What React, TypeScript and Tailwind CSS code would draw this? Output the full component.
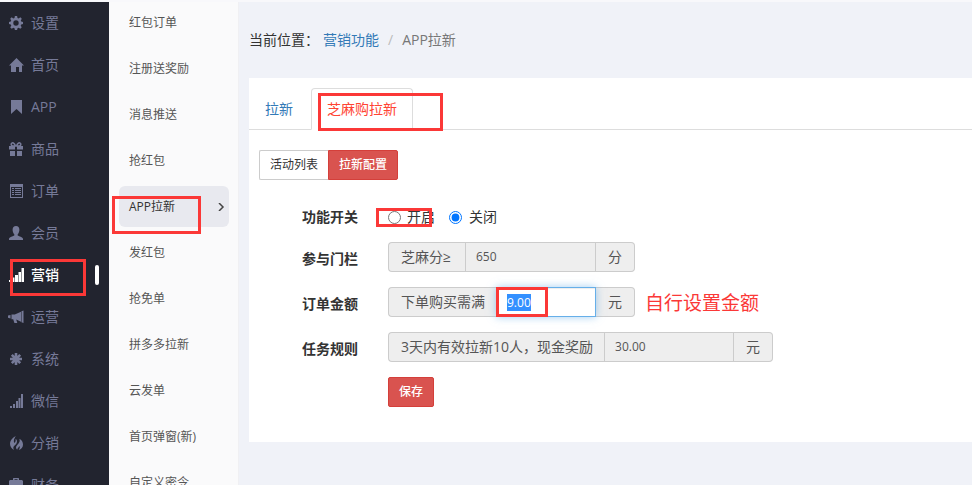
import { useEffect, useRef, useState } from 'react';
import type { ReactNode } from 'react';

interface NavItem {
  label: string;
  icon: ReactNode;
}

const navItems: NavItem[] = [
  {
    label: '设置',
    icon: (
      <path
        fillRule="evenodd"
        d="M5.900 0h2.200l.4 1.900 1.200.5 1.600-1.100 1.500 1.500-1 1.700.4 1.100 1.800.4v2.100l-1.800.4-.5 1.200 1.100 1.600-1.500 1.500-1.700-1.100-1.100.5L8.100 14H5.900l-.4-1.800-1.100-.5-1.700 1.100-1.500-1.500 1.100-1.600-.5-1.200L0 8.100V6l1.800-.4.4-1.100-1-1.700 1.500-1.500 1.600 1.100 1.200-.5zM7 4.300a2.700 2.700 0 1 0 0 5.400 2.700 2.700 0 0 0 0-5.400z"
      />
    ),
  },
  { label: '首页', icon: <path d="M7.500 0L15 7.500h-2V14h-3V9H7v5H2V7.500H0z" /> },
  { label: 'APP', icon: <path d="M2 0h11v14L7.500 9 2 14z" /> },
  {
    label: '商品',
    icon: (
      <>
        <path d="M0 4h6v3.500H0zM8 4h6v3.500H8zM1 9h5v5H1zM8 9h5v5H8z" />
        <path
          d="M6.500 4C5.500 1.500 4.300.7 3.200.9 1.800 1.200 1.700 3.500 3.500 4zM7.500 4C8.500 1.500 9.700.7 10.800.9c1.400.3 1.500 2.600-.3 3.100z"
          fill="none"
          stroke="currentColor"
          strokeWidth="1.500"
        />
      </>
    ),
  },
  {
    label: '订单',
    icon: (
      <path
        fillRule="evenodd"
        d="M1 0h13v14H1zM2 3v10h11V3zM3 4h2v1H3zM6 4h6v1H6zM3 6h2v1H3zM6 6h6v1H6zM3 8h2v1H3zM6 8h6v1H6zM3 10h2v1H3zM6 10h6v1H6z"
      />
    ),
  },
  {
    label: '会员',
    icon: (
      <path d="M7 0c2.200 0 3.400 1.500 3.400 3.800 0 1.800-.7 3.500-1.700 4.500v1.300c1 .8 5.300 1.500 5.300 3.400v1H0v-1c0-1.900 4.300-2.600 5.300-3.400V8.300c-1-1-1.700-2.700-1.700-4.500C3.600 1.500 4.800 0 7 0z" />
    ),
  },
  {
    label: '营销',
    icon: <path d="M0 12h2v2H0zM3 9.500h2.500V14H3zM6 7h3v7H6zM9.500 4H12v10H9.500zM12.500 0H15v14h-2.500z" />,
  },
  {
    label: '运营',
    icon: (
      <path d="M14.500 .500v12.500l-2-.8V1.300zM12 1.800v9.900L7.200 9.500 8.300 13H5.400L4.200 9.200H2.500V4.500h3.300zM1.500 5v3.500L-1 7.800V5.600z" />
    ),
  },
  {
    label: '系统',
    icon: (
      <path
        d="M7 1v12M1 7h12M2.800 2.800l8.400 8.400M11.200 2.800l-8.400 8.400"
        stroke="currentColor"
        strokeWidth="2.600"
      />
    ),
  },
  {
    label: '微信',
    icon: <path d="M1 12h2v2H1zM4 10h2v4H4zM7 7h2v7H7zM9.500 4H11.500v10H9.500zM12 0h2v14h-2z" />,
  },
  {
    label: '分销',
    icon: (
      <path d="M6.800 0C5 .8 1 4 1 7.800c0 2.600 1.400 4.800 4 6.200-.8-1.500-.9-2.600-.3-3.600 1-1.500 3.300-2.500 3.300-5C8 4 7.300 3.300 6.500 3c.5 1.800.1 2.900-1.200 4C4.300 5 5 2.800 6.800 0zM10.300 2.800c.8 1.900.4 3-.8 4.700C8.400 9 7 10 7 11.500c0 .9.500 1.600 1.200 2.200C8.400 12.300 9.500 11.700 10.500 10c.6 1.400.2 2.700-.8 4C12.300 13.300 14 11.200 14 8.500c0-2.400-1.400-4.600-3.700-5.700z" />
    ),
  },
  {
    label: '财务',
    icon: (
      <path
        fillRule="evenodd"
        d="M4 2V.500L4.500 0h5l.5.500V2h3l1 1v4H0V3l1-1zm1.500 0h3v-.800h-3zM0 8h6v1h2V8h6v5.500H0z"
      />
    ),
  },
];

const subItems = [
  '红包订单',
  '注册送奖励',
  '消息推送',
  '抢红包',
  'APP拉新',
  '发红包',
  '抢免单',
  '拼多多拉新',
  '云发单',
  '首页弹窗(新)',
  '自定义密令',
];

// Red frame drawn over the control that a step refers to
function Mark({ className }: { className: string }) {
  return (
    <span
      aria-hidden="true"
      className={`pointer-events-none absolute z-10 border-3 border-[#fb3837] ${className}`}
    />
  );
}

function Addon({ children }: { children: ReactNode }) {
  return (
    <span className="flex items-center border border-[#ccc] bg-[#eee] px-3 text-sm whitespace-nowrap text-[#555] first:min-w-[77px] first:rounded-l first:border-r-0 first:pr-[11px] last:rounded-r last:border-l-0">
      {children}
    </span>
  );
}

function Field({ label, htmlFor, children }: { label: string; htmlFor: string; children: ReactNode }) {
  return (
    <div className="flex gap-[30px]">
      <label htmlFor={htmlFor} className="w-[99px] shrink-0 pt-[7px] text-right leading-5 font-bold text-[#333]">
        {label}
      </label>
      {children}
    </div>
  );
}

export default function App() {
  const amountRef = useRef<HTMLInputElement>(null);
  const [enabled, setEnabled] = useState(false);
  const [amount, setAmount] = useState('9.00');

  useEffect(() => {
    amountRef.current?.focus();
    amountRef.current?.select();
  }, []);

  return (
    <div className="h-screen overflow-hidden border-t-2 border-[#f8f8fb] bg-[#f0f2f8] font-['Open_Sans','Noto_Sans_CJK_SC',sans-serif] text-sm text-[#333]">
      <div className="flex">
        <nav className="h-screen w-[109px] shrink-0 bg-[#22242f]">
          {navItems.map((item) => {
            const active = item.label === '营销';
            return (
              <a
                key={item.label}
                href="#"
                className={`relative flex h-[42px] items-center pr-[10px] pl-[9px] ${
                  active ? 'font-medium text-white' : 'text-[#767a98]'
                }`}
              >
                <svg className="mr-2 h-[14px] w-[14px] overflow-visible" viewBox="0 0 14 14" fill="currentColor">
                  {item.icon}
                </svg>
                {item.label}
                {active && (
                  <>
                    <span className="ml-auto h-5 w-1 rounded-sm bg-white" />
                    <Mark className="top-[5px] left-[10px] h-[37px] w-[76px]" />
                  </>
                )}
              </a>
            );
          })}
        </nav>

        <nav className="h-screen w-[130px] shrink-0 border-r border-[#f0f0f3] bg-[#fafafb] pr-[9px] pl-[10px] text-xs text-[#555]">
          {subItems.map((label) => {
            const active = label === 'APP拉新';
            return (
              <a
                key={label}
                href="#"
                className={`relative mb-[5px] flex h-[41px] items-center justify-between rounded-md pr-1 pl-[10px] ${
                  active ? 'bg-[#e8e9ef] text-[#333]' : ''
                }`}
              >
                {label}
                {active && (
                  <>
                    <svg className="h-2 w-2" viewBox="0 0 8 8" fill="none" stroke="#444" strokeWidth="1.500">
                      <path d="M2 0l4 4-4 4" />
                    </svg>
                    <Mark className="top-[10px] -left-[7px] h-[38px] w-[89px]" />
                  </>
                )}
              </a>
            );
          })}
        </nav>

        <main className="min-w-0 flex-1 pl-[10px]">
          <div className="flex items-center pt-7 pb-7 leading-5">
            <span>当前位置：</span>
            <a href="#" className="ml-1 text-[#337ab7]">
              营销功能
            </a>
            <span className="px-[9px] text-[#bbb]">/</span>
            <span className="text-[#777]">APP拉新</span>
          </div>

          <section className="bg-white pt-[10px] pb-[35px]">
            <div role="tablist" className="flex border-b border-[#ddd]">
              <button role="tab" aria-selected="false" className="mr-[2px] px-4 pt-[11px] pb-[10px] leading-5 text-[#337ab7]">
                拉新
              </button>
              <div className="relative -mb-px">
                <button
                  role="tab"
                  aria-selected="true"
                  className="rounded-t border border-[#ddd] border-b-white bg-white px-[15px] py-[10px] leading-5 text-[#ff4433]"
                >
                  芝麻购拉新
                </button>
                <Mark className="top-[5px] left-[7px] h-[38px] w-[125px]" />
              </div>
            </div>

            <div className="flex px-[10px] pt-5 text-xs">
              <button className="h-[30px] rounded-l-xs border border-r-0 border-[#ccc] bg-white px-[10px]">活动列表</button>
              <button className="h-[30px] rounded-r-xs border border-[#d43f3a] bg-[#d9534f] px-[10px] font-medium text-white">
                拉新配置
              </button>
            </div>

            <form className="flex flex-col gap-[15px] pt-5 pl-[10px]" onSubmit={(e) => e.preventDefault()}>
              <Field label="功能开关" htmlFor="switch-on">
                <div className="relative flex h-[27px] items-center gap-[14px] pt-[7px]">
                  <label className="flex items-center gap-[6px] leading-5">
                    <input
                      id="switch-on"
                      type="radio"
                      name="switch"
                      className="h-[13px] w-[13px]"
                      checked={enabled}
                      onChange={() => setEnabled(true)}
                    />
                    开启
                  </label>
                  <label className="flex items-center gap-[7px] leading-5">
                    <input
                      type="radio"
                      name="switch"
                      className="h-[13px] w-[13px]"
                      checked={!enabled}
                      onChange={() => setEnabled(false)}
                    />
                    关闭
                  </label>
                  <Mark className="top-2 -left-3 h-[19px] w-[56px]" />
                </div>
              </Field>

              <Field label="参与门栏" htmlFor="threshold">
                <div className="flex h-[30px]">
                  <Addon>芝麻分≥</Addon>
                  <input
                    id="threshold"
                    readOnly
                    value="650"
                    className="w-[131px] border border-[#ccc] bg-[#eee] px-[10px] text-xs text-[#555]"
                  />
                  <Addon>分</Addon>
                </div>
              </Field>

              <Field label="订单金额" htmlFor="amount">
                <div className="flex h-[30px]">
                  <Addon>下单购买需满</Addon>
                  <div className="relative">
                    <input
                      id="amount"
                      ref={amountRef}
                      value={amount}
                      onChange={(e) => setAmount(e.target.value)}
                      className="h-full w-[100px] border border-[#66afe9] bg-white px-[10px] text-xs text-[#555] shadow-[inset_0_1px_1px_rgba(0,0,0,0.075),0_0_8px_rgba(102,175,233,0.6)] outline-none selection:bg-[#3390ff] selection:text-white"
                    />
                    <Mark className="top-0 left-0 h-[30px] w-[52px]" />
                  </div>
                  <Addon>元</Addon>
                </div>
                <span className="-ml-5 pt-1 text-[19px] leading-6 text-[#fb3837]">自行设置金额</span>
              </Field>

              <Field label="任务规则" htmlFor="reward">
                <div className="flex h-[30px]">
                  <Addon>3天内有效拉新10人，现金奖励</Addon>
                  <input
                    id="reward"
                    readOnly
                    value="30.00"
                    className="w-[130px] border border-[#ccc] bg-[#eee] px-[10px] text-xs text-[#555]"
                  />
                  <Addon>元</Addon>
                </div>
              </Field>

              <button
                type="submit"
                className="ml-[129px] h-[30px] self-start rounded-xs border border-[#d43f3a] bg-[#d9534f] px-[10px] text-xs font-medium text-white"
              >
                保存
              </button>
            </form>
          </section>
        </main>
      </div>
    </div>
  );
}
